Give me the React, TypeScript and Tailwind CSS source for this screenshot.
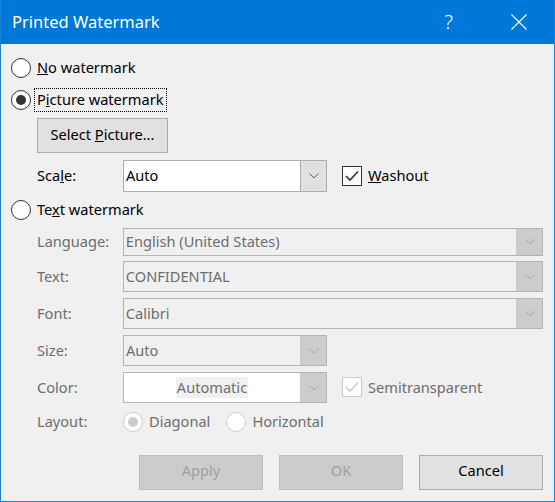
import React from "react";

const font = { fontFamily: '"Noto Sans", "Open Sans", sans-serif' };

function Chevron({ color = "#606060" }: { color?: string }) {
  return (
    <svg width="10" height="6" viewBox="0 0 10 6" fill="none">
      <path d="M0.5 0.5 L5 5 L9.5 0.5" stroke={color} strokeWidth="1" />
    </svg>
  );
}

function Radio({ checked, disabled }: { checked?: boolean; disabled?: boolean }) {
  return (
    <span
      className={`flex h-[20px] w-[20px] shrink-0 items-center justify-center rounded-full border bg-white ${
        disabled ? "border-[#cccccc]" : "border-[#333333]"
      }`}
    >
      {checked && (
        <span className={`h-[10px] w-[10px] rounded-full ${disabled ? "bg-[#cccccc]" : "bg-[#333333]"}`} />
      )}
    </span>
  );
}

function Check({ disabled }: { disabled?: boolean }) {
  return (
    <span
      className={`flex h-[20px] w-[20px] shrink-0 items-center justify-center border bg-white ${
        disabled ? "border-[#cccccc]" : "border-[#333333]"
      }`}
    >
      <svg width="14" height="12" viewBox="0 0 14 12" fill="none">
        <path d="M1 6 L5 10 L13 1.5" stroke={disabled ? "#cccccc" : "#333333"} strokeWidth="1.6" />
      </svg>
    </span>
  );
}

function Combo({
  value,
  width,
  height,
  disabled,
  white,
  center,
}: {
  value: string;
  width: string;
  height: string;
  disabled?: boolean;
  white?: boolean;
  center?: boolean;
}) {
  return (
    <div
      className={`flex ${width} ${height} border ${
        disabled ? "border-[#b4b4b4]" : "border-[#adadad]"
      } ${white ? "bg-white" : "bg-[#f0f0f0]"}`}
    >
      <div
        className={`flex flex-1 items-center ${center ? "justify-center" : "pl-[2px]"} ${
          disabled ? "text-[#6d6d6d]" : "text-black"
        }`}
      >
        <span className={center ? "bg-[#f0f0f0] px-[1px]" : ""}>{value}</span>
      </div>
      <div
        className={`flex w-[26px] items-center justify-center border-l ${
          disabled ? "border-[#cccccc] bg-[#cccccc]" : "border-[#adadad] bg-[#e1e1e1]"
        }`}
      >
        <Chevron color={disabled ? "#a8a8a8" : "#606060"} />
      </div>
    </div>
  );
}

function Row({ label, children, mt }: { label: string; children: React.ReactNode; mt: string }) {
  return (
    <div className={`flex items-center ${mt}`}>
      <span className="ml-[26px] w-[86px] text-[#6d6d6d]">{label}</span>
      {children}
    </div>
  );
}

export default function App() {
  return (
    <div
      className="flex h-[502px] w-[555px] flex-col border-x border-b border-[#1883d7] bg-[#f0f0f0] text-black"
      style={font}
    >
      <div className="flex h-[44px] items-center bg-[#0078d7] pl-[11px] text-white">
        <span className="text-[16.5px]">Printed Watermark</span>
        <span className="ml-auto mr-[58px] text-[20px] font-light">?</span>
        <svg className="mr-[27px]" width="16" height="16" viewBox="0 0 16 16">
          <path d="M0.5 0.5 L15.5 15.5 M15.5 0.5 L0.5 15.5" stroke="white" strokeWidth="1.1" />
        </svg>
      </div>

      <div className="flex flex-col pl-[10px] pr-[11px] text-[14.6px]">
        <label className="mt-[14px] flex h-[20px] items-center gap-[6px]">
          <Radio />
          <span>
            <u>N</u>o watermark
          </span>
        </label>

        <label className="mt-[12px] flex h-[20px] items-center gap-[4px]">
          <Radio checked />
          <span className="px-[2px] outline-1 outline-dotted outline-black">
            P<u>i</u>cture watermark
          </span>
        </label>

        <button className="ml-[26px] mt-[8px] h-[35px] w-[131px] border border-[#adadad] bg-[#e1e1e1] pb-[2px]">
          Select <u>P</u>icture...
        </button>

        <div className="mt-[7px] flex items-center">
          <span className="ml-[26px] w-[86px]">
            Sca<u>l</u>e:
          </span>
          <Combo value="Auto" width="w-[204px]" height="h-[32px]" white />
          <label className="ml-[15px] flex items-center gap-[6px]">
            <Check />
            <span>
              <u>W</u>ashout
            </span>
          </label>
        </div>

        <label className="mt-[8px] flex h-[20px] items-center gap-[6px]">
          <Radio />
          <span>
            Te<u>x</u>t watermark
          </span>
        </label>

        <Row label="Language:" mt="mt-[8px]">
          <Combo value="English (United States)" width="w-[421px]" height="h-[28px]" disabled />
        </Row>
        <Row label="Text:" mt="mt-[5px]">
          <Combo value="CONFIDENTIAL" width="w-[421px]" height="h-[31px]" disabled />
        </Row>
        <Row label="Font:" mt="mt-[6px]">
          <Combo value="Calibri" width="w-[421px]" height="h-[31px]" disabled />
        </Row>
        <Row label="Size:" mt="mt-[6px]">
          <Combo value="Auto" width="w-[204px]" height="h-[31px]" disabled />
        </Row>
        <Row label="Color:" mt="mt-[6px]">
          <Combo value="Automatic" width="w-[204px]" height="h-[31px]" disabled white center />
          <label className="ml-[15px] flex items-center gap-[6px] text-[#6d6d6d]">
            <Check disabled />
            <span>Semitransparent</span>
          </label>
        </Row>
        <Row label="Layout:" mt="mt-[8px]">
          <label className="flex items-center gap-[6px] text-[#6d6d6d]">
            <Radio checked disabled />
            <span>Diagonal</span>
          </label>
          <label className="ml-[16px] flex items-center gap-[6px] text-[#6d6d6d]">
            <Radio disabled />
            <span>Horizontal</span>
          </label>
        </Row>

        <div className="mt-[22px] flex justify-end gap-[16px]">
          <button className="h-[35px] w-[124px] border border-[#bfbfbf] bg-[#cccccc] pb-[3px] text-[#a0a0a0]">
            Apply
          </button>
          <button className="h-[35px] w-[124px] border border-[#bfbfbf] bg-[#cccccc] pb-[3px] text-[#a0a0a0]">
            OK
          </button>
          <button className="h-[35px] w-[124px] border border-[#adadad] bg-[#e1e1e1] pb-[3px]">
            Cancel
          </button>
        </div>
      </div>
    </div>
  );
}
